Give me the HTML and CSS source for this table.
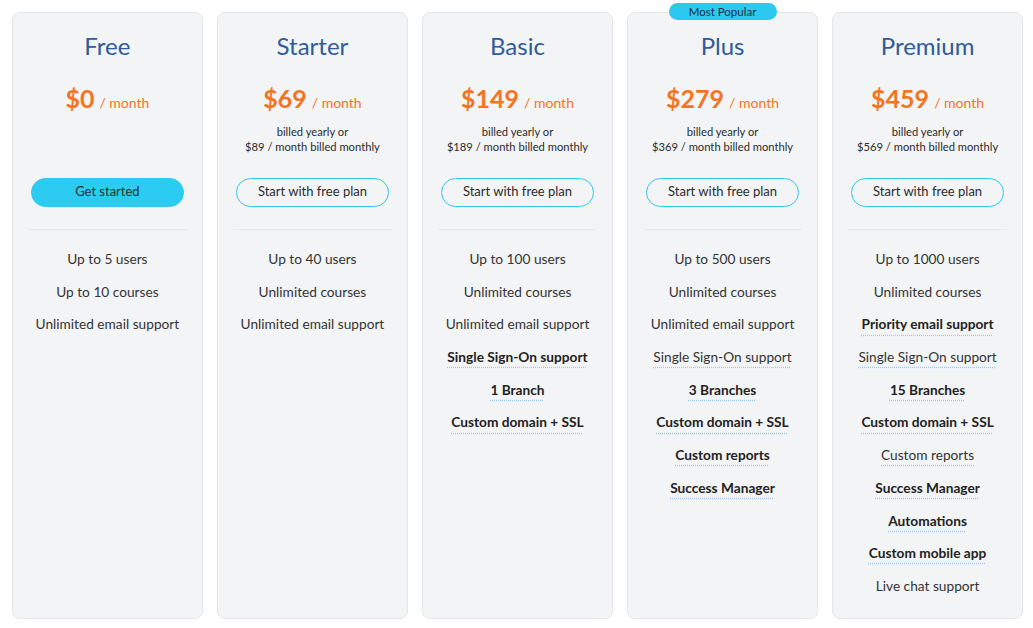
FILE: index.html
```html
<!DOCTYPE html>
<html lang="en">
<head>
<meta charset="utf-8">
<title>Pricing</title>
<link rel="stylesheet" href="styles.css">
</head>
<body>
<div class="plans">
  <div class="card">
    <h2 class="title">Free</h2>
    <div class="price"><span class="amount">$0</span><span class="per">/ month</span></div>
    <div class="billed"></div>
    <a class="btn btn-fill">Get started</a>
    <hr class="sep">
    <ul class="features">
      <li><span>Up to 5 users</span></li>
      <li><span>Up to 10 courses</span></li>
      <li><span>Unlimited email support</span></li>
    </ul>
  </div>
  <div class="card">
    <h2 class="title">Starter</h2>
    <div class="price"><span class="amount">$69</span><span class="per">/ month</span></div>
    <div class="billed">billed yearly or<br>$89 / month billed monthly</div>
    <a class="btn">Start with free plan</a>
    <hr class="sep">
    <ul class="features">
      <li><span>Up to 40 users</span></li>
      <li><span>Unlimited courses</span></li>
      <li><span>Unlimited email support</span></li>
    </ul>
  </div>
  <div class="card">
    <h2 class="title">Basic</h2>
    <div class="price"><span class="amount">$149</span><span class="per">/ month</span></div>
    <div class="billed">billed yearly or<br>$189 / month billed monthly</div>
    <a class="btn">Start with free plan</a>
    <hr class="sep">
    <ul class="features">
      <li><span>Up to 100 users</span></li>
      <li><span>Unlimited courses</span></li>
      <li><span>Unlimited email support</span></li>
      <li><span class="hl">Single Sign-On support</span></li>
      <li><span class="hl">1 Branch</span></li>
      <li><span class="hl">Custom domain + SSL</span></li>
    </ul>
  </div>
  <div class="card">
    <div class="badge">Most Popular</div>
    <h2 class="title">Plus</h2>
    <div class="price"><span class="amount">$279</span><span class="per">/ month</span></div>
    <div class="billed">billed yearly or<br>$369 / month billed monthly</div>
    <a class="btn">Start with free plan</a>
    <hr class="sep">
    <ul class="features">
      <li><span>Up to 500 users</span></li>
      <li><span>Unlimited courses</span></li>
      <li><span>Unlimited email support</span></li>
      <li><span class="ul">Single Sign-On support</span></li>
      <li><span class="hl">3 Branches</span></li>
      <li><span class="hl">Custom domain + SSL</span></li>
      <li><span class="hl">Custom reports</span></li>
      <li><span class="hl">Success Manager</span></li>
    </ul>
  </div>
  <div class="card">
    <h2 class="title">Premium</h2>
    <div class="price"><span class="amount">$459</span><span class="per">/ month</span></div>
    <div class="billed">billed yearly or<br>$569 / month billed monthly</div>
    <a class="btn">Start with free plan</a>
    <hr class="sep">
    <ul class="features">
      <li><span>Up to 1000 users</span></li>
      <li><span>Unlimited courses</span></li>
      <li><span class="hl">Priority email support</span></li>
      <li><span class="ul">Single Sign-On support</span></li>
      <li><span class="hl">15 Branches</span></li>
      <li><span class="hl">Custom domain + SSL</span></li>
      <li><span class="ul">Custom reports</span></li>
      <li><span class="hl">Success Manager</span></li>
      <li><span class="hl">Automations</span></li>
      <li><span class="hl">Custom mobile app</span></li>
      <li><span>Live chat support</span></li>
    </ul>
  </div>
</div>
</body>
</html>
```

FILE: styles.css
```css
html, body {
  margin: 0;
  padding: 0;
  background: #ffffff;
}
body {
  font-family: Lato, "Noto Sans", sans-serif;
  color: #2b2b2b;
}
.plans {
  display: flex;
  gap: 14.25px;
  width: 1011px;
  margin: 12px 0 0 12px;
}
.card {
  position: relative;
  flex: 1 1 0;
  height: 607px;
  box-sizing: border-box;
  background: #f3f4f6;
  border: 1px solid #e4e6ea;
  border-radius: 8px;
  padding: 19px 15px 0;
  display: flex;
  flex-direction: column;
  align-items: center;
  text-align: center;
}
.badge {
  position: absolute;
  top: -10px;
  left: 50%;
  transform: translateX(-50%);
  width: 108px;
  height: 17px;
  line-height: 17px;
  border-radius: 9px;
  background: #2cc8f0;
  color: #1f2d3d;
  font-size: 11.5px;
}
.title {
  margin: 0;
  font-size: 24px;
  line-height: 28px;
  font-weight: 400;
  color: #2e5b9c;
}
.price {
  margin-top: 23px;
  height: 30px;
  line-height: 30px;
  color: #f47421;
  white-space: nowrap;
}
.amount {
  font-size: 25px;
  font-weight: 700;
}
.per {
  font-size: 14px;
  margin-left: 5px;
}
.billed {
  box-sizing: border-box;
  height: 65px;
  padding-top: 11px;
  font-size: 11.2px;
  line-height: 15px;
  color: #2b2b2b;
}
.btn {
  display: block;
  box-sizing: border-box;
  width: 153px;
  height: 29px;
  line-height: 24px;
  padding-bottom: 3px;
  border: 1px solid #2cc8f0;
  border-radius: 15px;
  font-size: 13px;
  color: #2b2b2b;
  cursor: pointer;
}
.btn-fill {
  background: #2cccf2;
}
.sep {
  align-self: stretch;
  margin: 22px 0 0;
  border: 0;
  border-top: 1px solid #e6e8ec;
  height: 0;
}
.features {
  list-style: none;
  margin: 0;
  padding: 13px 0 0;
  align-self: stretch;
}
.features li {
  height: 32.7px;
  line-height: 32.7px;
  font-size: 13.7px;
  color: #333;
}
.hl {
  font-weight: 700;
  color: #222;
  text-decoration: underline dotted #9cc6ec;
  text-underline-offset: 5px;
}
.ul {
  text-decoration: underline dotted #9cc6ec;
  text-underline-offset: 5px;
}
```
